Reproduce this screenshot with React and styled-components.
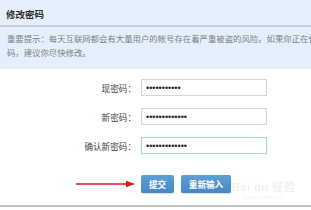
import React from 'react'
import styled, { createGlobalStyle } from 'styled-components'

const Global = createGlobalStyle`
  html, body {
    margin: 0;
    padding: 0;
    background: #ffffff;
    overflow: hidden;
  }
  body {
    width: 311px;
    height: 210px;
    font-family: "Liberation Sans", "Noto Sans CJK SC", sans-serif;
  }
`

const Page = styled.div`
  position: relative;
  width: 311px;
  height: 210px;
  overflow: hidden;
  background: #fff;
`

const Header = styled.div`
  height: 69px;
  background: #e4effb;
  box-sizing: border-box;
`

const TitleBar = styled.div`
  height: 27px;
  padding-left: 6px;
  display: flex;
  align-items: center;
  border-bottom: 2px solid #c6cfd8;
  font-size: 9.5px;
  font-weight: bold;
  color: #2b2b2b;
  padding-top: 2px;
  box-sizing: border-box;
`

const Notice = styled.div`
  padding: 5px 0 0 7px;
  font-size: 8.4px;
  line-height: 14px;
  color: #7a7f86;
  white-space: nowrap;
`

const Form = styled.div`
  display: grid;
  grid-template-columns: 136px 126px;
  column-gap: 5px;
  row-gap: 12px;
  padding-top: 10px;
`

const Label = styled.label`
  display: flex;
  align-items: center;
  justify-content: flex-end;
  font-size: 8.6px;
  color: #444;
  height: 17px;
`

const Field = styled.input`
  box-sizing: border-box;
  width: 126px;
  height: 17px;
  margin: 0;
  padding: 0 4px;
  border: 1px solid ${p => (p.$focus ? '#a6d3e6' : '#d6d6d6')};
  box-shadow: ${p => (p.$focus ? '0 0 1px #bfe3f0' : 'none')};
  font-size: 9px;
  font-family: "Liberation Sans", sans-serif;
  color: #222;
  letter-spacing: 0;
  outline: none;
  background: #fff;
`

const ArrowCell = styled.div`
  display: flex;
  align-items: center;
  justify-content: flex-end;
  margin-top: 9px;
  height: 18px;
`

const Buttons = styled.div`
  display: flex;
  gap: 7px;
  margin-top: 9px;
`

const Button = styled.button`
  height: 18px;
  width: ${p => p.$w}px;
  padding: 0;
  border: none;
  border-radius: 2px;
  background: linear-gradient(#5d9fd6, #4487c4);
  color: #fff;
  font-size: 8.6px;
  font-weight: bold;
  font-family: "Liberation Sans", "Noto Sans CJK SC", sans-serif;
  box-shadow: 0 1px 1px rgba(0, 0, 0, 0.15);
`

const BottomRule = styled.div`
  margin-top: 12px;
  height: 2px;
  background: #c3c3c3;
`

const Watermark = styled.div`
  position: absolute;
  right: 16px;
  top: 178px;
  display: flex;
  flex-direction: column;
  align-items: center;
  color: rgba(170, 170, 170, 0.2);
  font-family: "Liberation Sans", "Noto Sans CJK SC", sans-serif;
  pointer-events: none;
`

const MarkTop = styled.div`
  font-size: 11px;
  font-weight: bold;
  letter-spacing: 0.5px;
`

const MarkSub = styled.div`
  font-size: 5px;
`

const Arrow = () => (
  <svg width="60" height="8" viewBox="0 0 60 8">
    <line x1="0" y1="4" x2="52" y2="4" stroke="#d9161b" strokeWidth="1.6" />
    <path d="M50 0.8 L59 4 L50 7.2 Z" fill="#d9161b" />
  </svg>
)

export default function App() {
  return (
    <Page>
      <Global />
      <Header>
        <TitleBar>修改密码</TitleBar>
        <Notice>
          重要提示：每天互联网都会有大量用户的帐号存在着严重被盗的风险。如果你正在使用的是简单密
          <br />
          码，建议你尽快修改。
        </Notice>
      </Header>
      <Form>
        <Label>现密码：</Label>
        <Field type="password" readOnly defaultValue="12345678901" />
        <Label>新密码：</Label>
        <Field type="password" readOnly defaultValue="1234567890123" />
        <Label>确认新密码：</Label>
        <Field type="password" readOnly defaultValue="1234567890123" $focus />
        <ArrowCell>
          <Arrow />
        </ArrowCell>
        <Buttons>
          <Button $w={33}>提交</Button>
          <Button $w={50}>重新输入</Button>
        </Buttons>
      </Form>
      <BottomRule />
      <Watermark>
        <MarkTop>Bai du 经验</MarkTop>
        <MarkSub>jingyan.baidu.com</MarkSub>
      </Watermark>
    </Page>
  )
}
